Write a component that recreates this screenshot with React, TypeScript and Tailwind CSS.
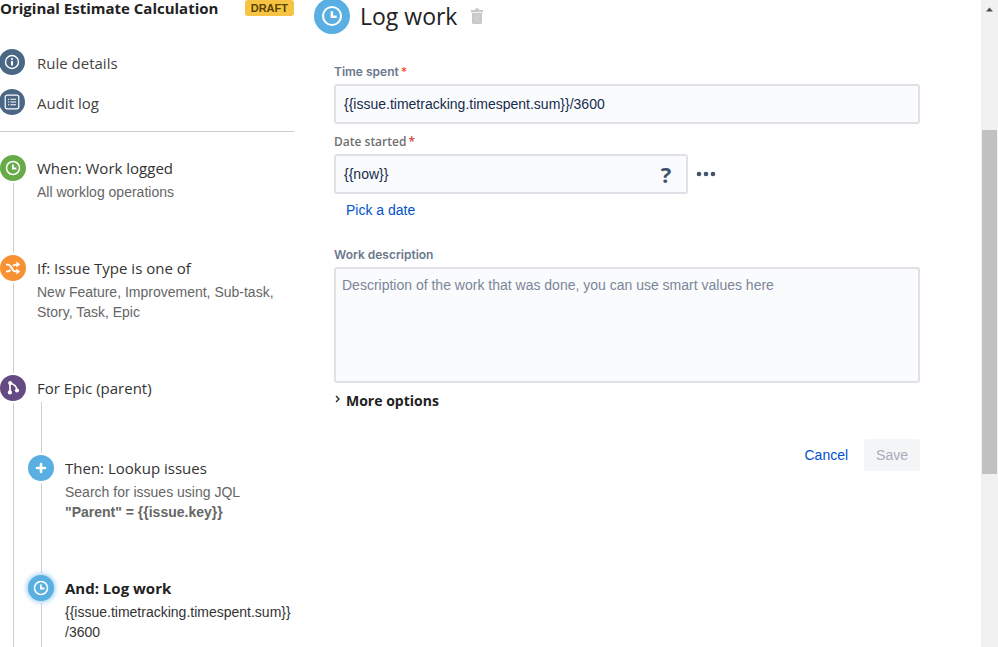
import type { ReactNode } from "react";

function ClockIcon({ className = "" }: { className?: string }) {
  return (
    <svg viewBox="0 0 26 26" fill="none" className={className} aria-hidden="true">
      <circle cx="13" cy="13" r="6.5" stroke="white" strokeWidth="1.5" />
      <path d="M12.9 9.6v3.9h3.5" stroke="white" strokeWidth="1.8" />
    </svg>
  );
}

function InfoIcon() {
  return (
    <svg viewBox="0 0 26 26" fill="none" className="size-[26px]" aria-hidden="true">
      <circle cx="13" cy="13" r="6.5" stroke="white" strokeWidth="1.4" />
      <circle cx="13" cy="10" r="1.1" fill="white" />
      <path d="M13 12v4.6" stroke="white" strokeWidth="2" />
    </svg>
  );
}

function ListIcon() {
  return (
    <svg viewBox="0 0 26 26" fill="none" className="size-[26px]" aria-hidden="true">
      <rect x="6.2" y="6.2" width="13.6" height="13.6" rx="2" stroke="white" strokeWidth="1.2" />
      <path
        d="M9 10.2h1.2M11.4 10.2H17M9 13h1.2M11.4 13H17M9 15.8h1.2M11.4 15.8H17"
        stroke="white"
        strokeWidth="1.1"
      />
    </svg>
  );
}

function ShuffleIcon() {
  return (
    <svg viewBox="0 0 26 26" fill="none" className="size-[26px]" aria-hidden="true">
      <path
        d="M6 9.6h1.8c1.2 0 1.9.5 2.6 1.5l2.5 3.8c.7 1 1.3 1.5 2.5 1.5H17M6 16.4h1.8c1.2 0 1.9-.5 2.6-1.5M13 11.1c.7-1 1.3-1.5 2.5-1.5H17"
        stroke="white"
        strokeWidth="1.9"
      />
      <path d="M16.4 6.6 20.2 9.6l-3.800 3zM16.400 13.400l3.800 3-3.800 3z" fill="white" />
    </svg>
  );
}

function BranchIcon() {
  return (
    <svg viewBox="0 0 26 26" fill="none" className="size-[26px]" aria-hidden="true">
      <path d="M10 8v9.5M10 8c3 .8 6.300 2.500 7 7" stroke="white" strokeWidth="1.700" />
      <circle cx="10.200" cy="8" r="2.100" fill="white" />
      <circle cx="9.900" cy="17.400" r="2.100" fill="white" />
      <circle cx="17" cy="15.500" r="2.100" fill="white" />
    </svg>
  );
}

function PlusIcon() {
  return (
    <svg viewBox="0 0 26 26" fill="none" className="size-[26px]" aria-hidden="true">
      <path d="M13 9v8M9 13h8" stroke="white" strokeWidth="2.600" strokeLinecap="round" />
    </svg>
  );
}

function TrashIcon() {
  return (
    <svg viewBox="0 0 12 16" fill="#c8c8c8" className="h-4 w-3" aria-hidden="true">
      <path d="M4 .5h4V2h4v2.200H0V2h4z" />
      <path d="M1 5h10v9.500a1.500 1.500 0 0 1-1.500 1.500h-7A1.500 1.500 0 0 1 1 14.500z" />
      <path d="M4 6.500v7.500M6 6.500v7.500M8 6.500v7.500" stroke="#d8d8d8" strokeWidth=".7" />
    </svg>
  );
}

function NavItem({ icon, label }: { icon: ReactNode; label: string }) {
  return (
    <a href="#" className="flex h-[26px] items-center gap-3">
      <span className="-ml-px size-[26px] shrink-0 rounded-full bg-[#4a6785]">{icon}</span>
      <span className="pt-0.5 font-['Open_Sans',sans-serif] text-[15px] leading-5 text-[#444]">
        {label}
      </span>
    </a>
  );
}

interface StepProps {
  icon: ReactNode;
  color: string;
  title: string;
  active?: boolean;
  nested?: ReactNode;
  children?: ReactNode;
}

function Step({ icon, color, title, active, nested, children }: StepProps) {
  return (
    <li className="flex">
      <div className="flex w-[26px] shrink-0 flex-col gap-0.5">
        <span
          className={`size-[26px] rounded-full ${color} ${
            active ? "shadow-[0_0_5px_1px_#8cc8ee]" : ""
          }`}
        >
          {icon}
        </span>
        <span className="mb-0.5 ml-[13px] w-px flex-1 bg-[#d0d0d0]" />
      </div>
      <div className="min-w-0 flex-1 pl-0.5">
        <div className={`pl-[9px] ${nested ? "" : "pb-[53px]"}`}>
          <h2
            className={`pt-px pb-0.5 font-['Open_Sans',sans-serif] text-[15px] leading-6 ${
              active ? "font-bold text-[#222]" : "text-[#333]"
            }`}
          >
            {title}
          </h2>
          {children && (
            <div
              className={`text-sm leading-5 break-words ${active ? "text-[#333]" : "text-[#666]"}`}
            >
              {children}
            </div>
          )}
        </div>
        {nested && (
          <ol>
            <li className="mb-0.5 ml-[13px] h-[51px] w-px bg-[#d0d0d0]" aria-hidden="true" />
            {nested}
          </ol>
        )}
      </div>
    </li>
  );
}

function Sidebar() {
  return (
    <aside className="w-[294px] shrink-0">
      <div className="flex h-4 items-center justify-between">
        <h1 className="font-['Open_Sans',sans-serif] text-[15px] leading-4 font-bold text-[#222]">
          Original Estimate Calculation
        </h1>
        <span className="rounded-[3px] bg-[#f6c342] px-1.5 text-[11px] leading-4 font-bold text-[#594300]">
          DRAFT
        </span>
      </div>
      <nav className="mt-[33px] flex flex-col gap-3.5 border-b border-[#ccc] pb-4">
        <NavItem icon={<InfoIcon />} label="Rule details" />
        <NavItem icon={<ListIcon />} label="Audit log" />
      </nav>
      <ol className="mt-[23px]">
        <Step icon={<ClockIcon className="size-[26px]" />} color="bg-[#67ab49]" title="When: Work logged">
          All worklog operations
        </Step>
        <Step icon={<ShuffleIcon />} color="bg-[#f79232]" title="If: Issue Type is one of">
          New Feature, Improvement, Sub-task, Story, Task, Epic
        </Step>
        <Step
          icon={<BranchIcon />}
          color="bg-[#654982]"
          title="For Epic (parent)"
          nested={
            <>
              <Step icon={<PlusIcon />} color="bg-[#59afe1]" title="Then: Lookup issues">
                <p>Search for issues using JQL</p>
                <p className="font-bold">"Parent" = {"{{issue.key}}"}</p>
              </Step>
              <Step
                icon={<ClockIcon className="size-[26px]" />}
                color="bg-[#59afe1]"
                title="And: Log work"
                active
              >
                {"{{issue.timetracking.timespent.sum}}"}
                <wbr />
                /3600
              </Step>
            </>
          }
        />
      </ol>
    </aside>
  );
}

function LogWorkForm() {
  return (
    <form className="flex flex-col pl-5 text-sm">
      <label
        htmlFor="time-spent"
        className="mt-7 font-['Inter',sans-serif] text-xs leading-5 font-semibold text-[#6b778c]"
      >
        Time spent<span className="pl-0.5 text-[#ff5630]">*</span>
      </label>
      <input
        id="time-spent"
        defaultValue="{{issue.timetracking.timespent.sum}}/3600"
        className="mt-0.5 h-10 rounded-[3px] border-2 border-[#dfe1e6] bg-[#fafbfc] px-2 text-[#172b4d]"
      />

      <label
        htmlFor="date-started"
        className="mt-2 font-['Open_Sans',sans-serif] text-xs leading-5 font-semibold text-[#707070]"
      >
        Date started<span className="pl-0.5 text-[#d04437]">*</span>
      </label>
      <div className="mt-0.5 flex items-center gap-2">
        <div className="flex h-10 w-[354px] items-center rounded-[3px] border-2 border-[#dfe1e6] bg-[#fafbfc] pr-3">
          <input
            id="date-started"
            defaultValue="{{now}}"
            className="h-full min-w-0 flex-1 px-2 text-[#172b4d]"
          />
          <button
            type="button"
            aria-label="Help"
            className="w-4 font-['Open_Sans',sans-serif] text-[22px] leading-9 font-bold text-[#42526e]"
          >
            ?
          </button>
        </div>
        <button type="button" aria-label="More">
          <svg viewBox="0 0 20 6" fill="#42526e" className="h-1.5 w-5">
            <circle cx="3" cy="3" r="2.300" />
            <circle cx="10" cy="3" r="2.300" />
            <circle cx="17" cy="3" r="2.300" />
          </svg>
        </button>
      </div>
      <a href="#" className="mt-1.5 self-start pl-3 leading-5 text-[#0052cc]">
        Pick a date
      </a>

      <label
        htmlFor="description"
        className="mt-[25px] font-['Inter',sans-serif] text-xs leading-5 font-semibold text-[#6b778c]"
      >
        Work description
      </label>
      <textarea
        id="description"
        placeholder="Description of the work that was done, you can use smart values here"
        className="mt-0.5 h-[116px] resize-none rounded-[3px] border-2 border-[#dfe1e6] bg-[#fafbfc] px-1.5 py-1.5 leading-5 placeholder:text-[#7a869a]"
      />
      <button
        type="button"
        className="mt-2 flex items-center gap-1 self-start font-['Open_Sans',sans-serif] leading-5 font-bold text-[#222]"
      >
        <svg viewBox="0 0 8 12" fill="none" stroke="#222" strokeWidth="1.300" className="h-3 w-2">
          <path d="M2 1 5 4 2 7" />
        </svg>
        More options
      </button>

      <div className="mt-7 flex justify-end gap-1">
        <button type="button" className="h-8 px-3 text-[#0052cc]">
          Cancel
        </button>
        <button type="submit" disabled className="h-8 rounded-[3px] bg-[#f4f5f7] px-3 text-[#a5adba]">
          Save
        </button>
      </div>
    </form>
  );
}

export default function App() {
  return (
    <div className="flex h-screen overflow-hidden bg-white font-['Liberation_Sans',Arial,sans-serif]">
      <Sidebar />
      <main className="min-w-0 flex-1 pr-[61px] pl-5">
        <header className="-mt-0.5 flex h-9 items-center gap-2.5">
          <span className="size-9 shrink-0 rounded-full bg-[#59afe1]">
            <ClockIcon className="size-9" />
          </span>
          <h1 className="font-['Open_Sans',sans-serif] text-[23px] leading-9 text-[#222]">
            Log work
          </h1>
          <button type="button" aria-label="Delete" className="ml-1">
            <TrashIcon />
          </button>
        </header>
        <LogWorkForm />
      </main>
      <div className="flex w-[17px] shrink-0 flex-col items-center bg-[#f1f1f1]" aria-hidden="true">
        <svg viewBox="0 0 17 17" fill="#505050" className="size-[17px]">
          <path d="M5 11.500 8.500 7.500l3.500 4z" />
        </svg>
        <div className="mt-[113px] h-[344px] w-[15px] bg-[#c1c1c1]" />
      </div>
    </div>
  );
}
